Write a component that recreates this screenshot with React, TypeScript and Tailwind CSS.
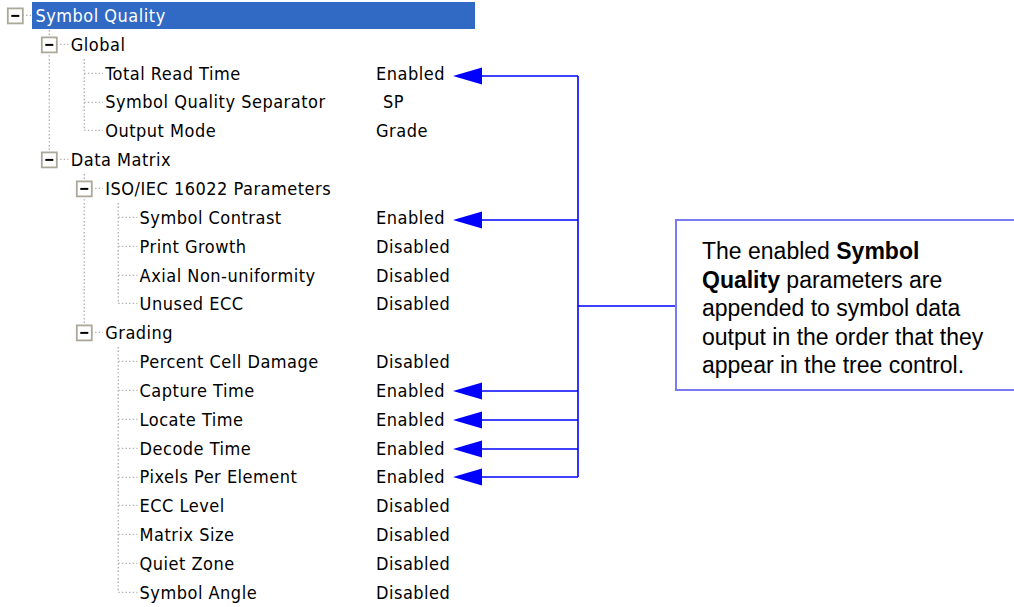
import React from 'react';

type Node = { label: string; level: number; value?: string; box?: boolean; selected?: boolean; pad?: boolean };

const nodes: Node[] = [
  { label: 'Symbol Quality', level: 0, box: true, selected: true },
  { label: 'Global', level: 1, box: true },
  { label: 'Total Read Time', level: 2, value: 'Enabled' },
  { label: 'Symbol Quality Separator', level: 2, value: 'SP', pad: true },
  { label: 'Output Mode', level: 2, value: 'Grade' },
  { label: 'Data Matrix', level: 1, box: true },
  { label: 'ISO/IEC 16022 Parameters', level: 2, box: true },
  { label: 'Symbol Contrast', level: 3, value: 'Enabled' },
  { label: 'Print Growth', level: 3, value: 'Disabled' },
  { label: 'Axial Non-uniformity', level: 3, value: 'Disabled' },
  { label: 'Unused ECC', level: 3, value: 'Disabled' },
  { label: 'Grading', level: 2, box: true },
  { label: 'Percent Cell Damage', level: 3, value: 'Disabled' },
  { label: 'Capture Time', level: 3, value: 'Enabled' },
  { label: 'Locate Time', level: 3, value: 'Enabled' },
  { label: 'Decode Time', level: 3, value: 'Enabled' },
  { label: 'Pixels Per Element', level: 3, value: 'Enabled' },
  { label: 'ECC Level', level: 3, value: 'Disabled' },
  { label: 'Matrix Size', level: 3, value: 'Disabled' },
  { label: 'Quiet Zone', level: 3, value: 'Disabled' },
  { label: 'Symbol Angle', level: 3, value: 'Disabled' },
];

// a node is the last of its siblings when the next row at its level or above is shallower
const isLast = (i: number) => {
  const L = nodes[i].level;
  for (let j = i + 1; j < nodes.length; j++) {
    if (nodes[j].level === L) return false;
    if (nodes[j].level < L) return true;
  }
  return true;
};

const ancestorLast = (i: number, k: number) => {
  for (let j = i; j >= 0; j--) if (nodes[j].level === k) return isLast(j);
  return true;
};

type Kind = 'pipe' | 'blank' | 'tee' | 'elbow' | 'root';

const CW = 34.4;
const RH = 28.85;
const CX = 15.3;
const CY = 14.4;

const Guide = ({ kind, box }: { kind: Kind; box?: boolean }) => (
  <svg width={CW} height={RH} viewBox={`0 0 ${CW} ${RH}`} className="shrink-0 block">
    <g stroke="#b0b0b0" strokeWidth="1.4" strokeDasharray="1.4 2.2" fill="none">
      {(kind === 'pipe' || kind === 'tee') && <line x1={CX} y1={0} x2={CX} y2={RH} />}
      {kind === 'elbow' && <line x1={CX} y1={0} x2={CX} y2={CY} />}
      {(kind === 'tee' || kind === 'elbow' || kind === 'root') && <line x1={CX} y1={CY} x2={CW} y2={CY} />}
    </g>
    {box && (
      <g>
        <rect x={CX - 7.5} y={CY - 7} width="15" height="15" fill="#fff" stroke="#aca899" strokeWidth="1.8" />
        <line x1={CX - 4} y1={CY + 0.5} x2={CX + 4} y2={CY + 0.5} stroke="#000" strokeWidth="2" />
      </g>
    )}
  </svg>
);

const TreeRow = ({ node, index }: { node: Node; index: number }) => {
  const cells: Kind[] = [];
  for (let k = 0; k < node.level; k++) cells.push(ancestorLast(index, k) ? 'blank' : 'pipe');
  cells.push(node.level === 0 ? 'root' : isLast(index) ? 'elbow' : 'tee');

  return (
    <div className="flex items-center h-[28.85px]">
      <div className="flex items-center w-[376px] shrink-0">
        {cells.map((k, i) => (
          <Guide key={i} kind={k} box={i === cells.length - 1 && node.box} />
        ))}
        {node.selected ? (
          <span className="ml-[-2px] shrink-0 w-[443px] h-[27px] leading-[27px] pl-[3px] bg-[#316ac5] text-white">
            {node.label}
          </span>
        ) : (
          <span className="pl-[2px] whitespace-nowrap">{node.label}</span>
        )}
      </div>
      {node.value && <span className={node.pad ? 'pl-[7px]' : ''}>{node.value}</span>}
    </div>
  );
};

const arrowYs = [76, 220, 391, 420, 449, 477];

const Connectors = () => (
  <svg width="222" height="607" viewBox="0 0 222 607" className="shrink-0 block">
    <g stroke="#0000ff" strokeWidth="1.6" fill="none">
      {arrowYs.map((y) => (
        <line key={y} x1="28" y1={y} x2="125" y2={y} />
      ))}
      <line x1="125" y1={arrowYs[0]} x2="125" y2={arrowYs[arrowYs.length - 1]} />
      <line x1="125" y1="306" x2="222" y2="306" />
    </g>
    {arrowYs.map((y) => (
      <polygon key={y} points={`0,${y} 29,${y - 8.5} 29,${y + 8.5}`} fill="#0000ff" />
    ))}
  </svg>
);

export default function App() {
  return (
    <div className="w-[1014px] h-[607px] bg-white overflow-hidden flex">
      <div className="w-[453px] shrink-0 pt-[1px] text-[18px] tracking-[0.5px] text-black font-['DejaVu_Sans_Condensed','DejaVu_Sans',sans-serif]">
        {nodes.map((n, i) => (
          <TreeRow key={i} node={n} index={i} />
        ))}
      </div>
      <Connectors />
      <div className="flex-1 mt-[219px] h-[172px] border-y-2 border-l-2 border-[#7a7af2] pt-[16px] pl-[25px] text-[23px] leading-[28.5px] text-black font-['Liberation_Sans',Arial,sans-serif]">
        The enabled <b>Symbol</b>
        <br />
        <b>Quality</b> parameters are
        <br />
        appended to symbol data
        <br />
        output in the order that they
        <br />
        appear in the tree control.
      </div>
    </div>
  );
}
